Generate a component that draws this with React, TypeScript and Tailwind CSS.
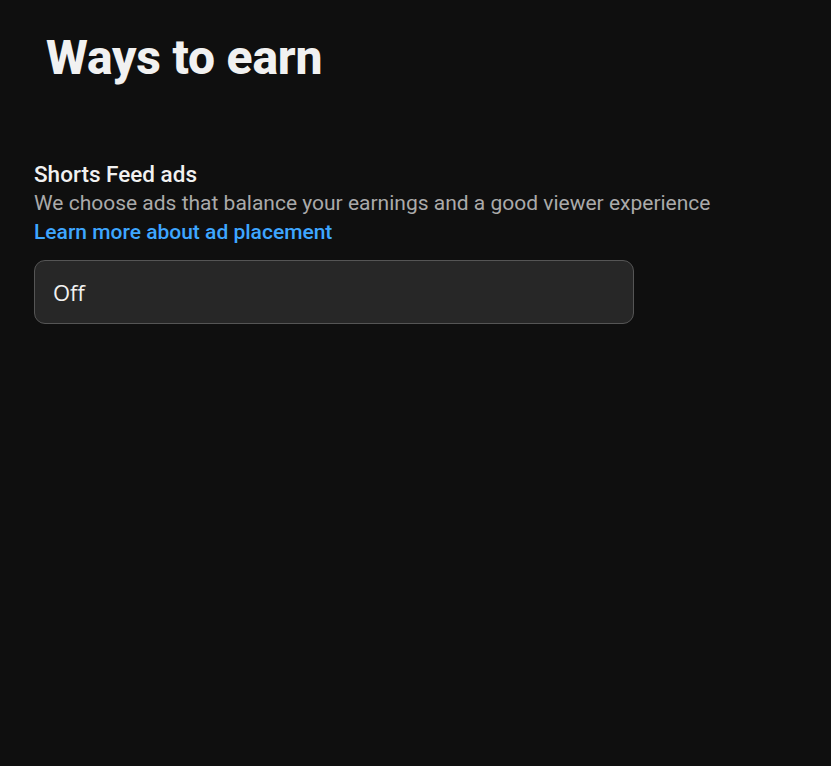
export default function App() {
  return (
    <div
      className="min-h-[766px] w-full bg-[#0f0f0f] text-white"
      style={{ fontFamily: "Roboto, 'Liberation Sans', sans-serif" }}
    >
      <div className="pl-[34px] pr-6">
        <h1 className="pl-[12px] pt-[28px] text-[48px] font-extrabold leading-[60px] tracking-[-0.2px] text-[#f1f1f1]">
          Ways to earn
        </h1>
        <div className="mt-[72px] flex flex-col">
          <div className="text-[22.5px] font-medium leading-[29px] text-[#f1f1f1]">Shorts Feed ads</div>
          <div className="text-[21px] leading-[29px] text-[#aaaaaa]">
            We choose ads that balance your earnings and a good viewer experience
          </div>
          <a className="text-[21px] font-medium leading-[29px] text-[#3ea6ff]" href="#">
            Learn more about ad placement
          </a>
          <div className="mt-[13px] flex h-[64px] w-[600px] items-center rounded-[11px] border-[1.5px] border-[#555555] bg-[#272727] px-[18px]">
            <span
              className="text-[22px] text-[#f1f1f1]"
              style={{ fontFamily: "'Open Sans', 'Noto Sans', sans-serif" }}
            >
              Off
            </span>
          </div>
        </div>
      </div>
    </div>
  );
}
